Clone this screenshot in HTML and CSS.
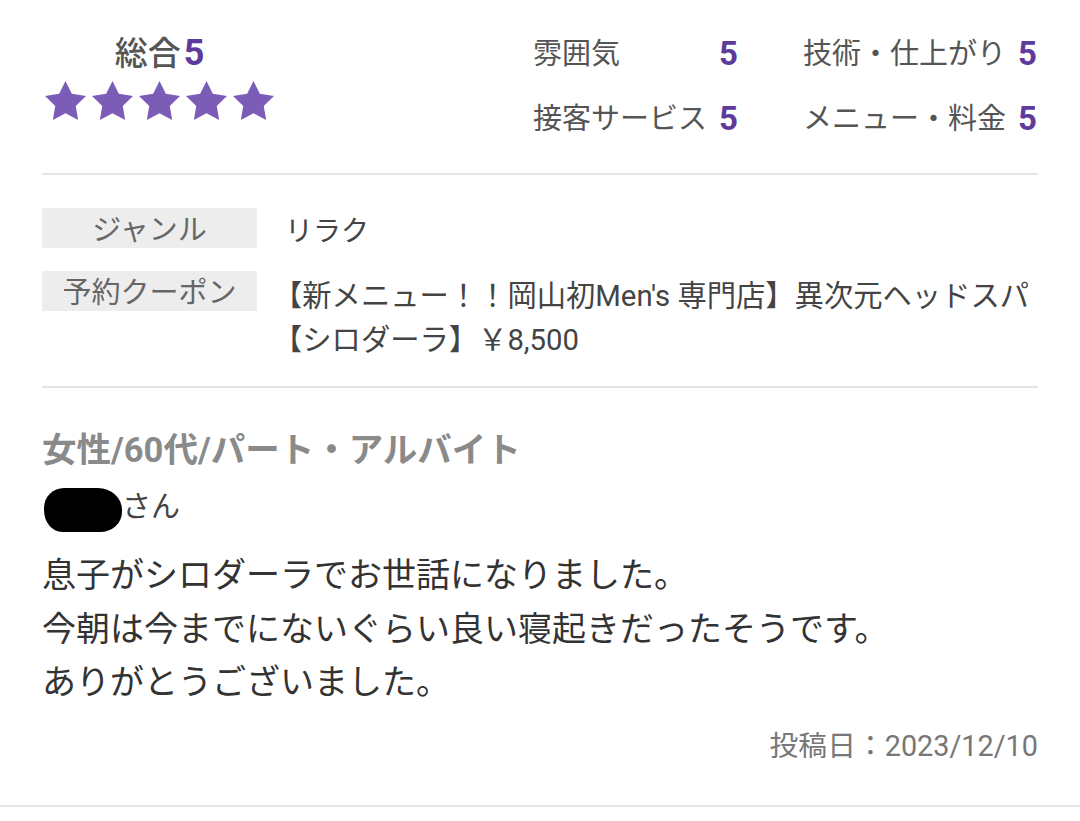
FILE: index.html
```html
<!DOCTYPE html>
<html lang="ja">
<head>
<meta charset="utf-8">
<link rel="stylesheet" href="styles.css">
</head>
<body>
<div class="review-card">
  <div class="summary">
    <div class="overall">
      <div class="overall-title">総合<span class="num">5</span></div>
      <div class="stars">
        <svg class="star" viewBox="2 2 20 19.02"><path d="M12 2l3.09 6.26L22 9.27l-5 4.870 1.18 6.88L12 17.77l-6.18 3.25L7 14.14 2 9.27l6.91-1.01L12 2z"/></svg>
        <svg class="star" viewBox="2 2 20 19.02"><path d="M12 2l3.09 6.26L22 9.27l-5 4.87 1.18 6.88L12 17.77l-6.18 3.25L7 14.14 2 9.27l6.91-1.01L12 2z"/></svg>
        <svg class="star" viewBox="2 2 20 19.02"><path d="M12 2l3.09 6.26L22 9.27l-5 4.87 1.18 6.88L12 17.77l-6.18 3.25L7 14.14 2 9.27l6.91-1.01L12 2z"/></svg>
        <svg class="star" viewBox="2 2 20 19.02"><path d="M12 2l3.09 6.26L22 9.27l-5 4.87 1.18 6.88L12 17.77l-6.18 3.25L7 14.14 2 9.27l6.91-1.01L12 2z"/></svg>
        <svg class="star" viewBox="2 2 20 19.02"><path d="M12 2l3.09 6.26L22 9.27l-5 4.87 1.18 6.88L12 17.77l-6.18 3.25L7 14.14 2 9.27l6.91-1.01L12 2z"/></svg>
      </div>
    </div>
    <div class="ratings">
      <span class="r-label">雰囲気</span><span class="num r-val">5</span>
      <span class="r-label col2">技術・仕上がり</span><span class="num r-val">5</span>
      <span class="r-label">接客サービス</span><span class="num r-val">5</span>
      <span class="r-label col2">メニュー・料金</span><span class="num r-val">5</span>
    </div>
  </div>

  <div class="details">
    <div class="d-row">
      <div class="d-label">ジャンル</div>
      <div class="d-value">リラク</div>
    </div>
    <div class="d-row">
      <div class="d-label">予約クーポン</div>
      <div class="d-value coupon">【新メニュー！！岡山初Men's 専門店】異次元ヘッドスパ<br>【シロダーラ】￥8,500</div>
    </div>
  </div>

  <div class="review">
    <div class="reviewer">女性/60代/パート・アルバイト</div>
    <div class="name"><span class="redact"></span>さん</div>
    <p class="body">息子がシロダーラでお世話になりました。<br>今朝は今までにないぐらい良い寝起きだったそうです。<br>ありがとうございました。</p>
    <div class="date">投稿日：2023/12/10</div>
  </div>
</div>
</body>
</html>
```

FILE: styles.css
```css
html, body {
  margin: 0;
  padding: 0;
  background: #fff;
}
body {
  font-family: Roboto, "Noto Sans CJK JP", sans-serif;
  color: #333;
}
.review-card {
  padding: 0 42px;
  border-bottom: 2px solid #e4e4e4;
}
.summary {
  display: flex;
  justify-content: space-between;
  align-items: flex-start;
  padding: 32px 0 34px;
  border-bottom: 2px solid #e4e4e4;
}
.overall {
  display: flex;
  flex-direction: column;
  align-items: center;
  margin-left: 3px;
}
.overall-title {
  font-size: 33px;
  line-height: 42px;
  color: #555;
  font-weight: 500;
}
.num {
  color: #5d3a9c;
  font-weight: 700;
}
.overall-title .num {
  font-size: 36px;
  margin-left: 3px;
}
.stars {
  display: flex;
  gap: 6px;
  margin-top: 6px;
}
.star {
  width: 41px;
  height: 39px;
  fill: #7b5cb7;
  display: block;
}
.ratings {
  display: grid;
  grid-template-columns: auto auto auto auto;
  column-gap: 12px;
  row-gap: 25px;
  align-items: center;
  margin-right: 1px;
  padding-top: 2px;
}
.r-label {
  font-size: 29px;
  line-height: 40px;
  color: #555;
}
.r-label.col2 {
  margin-left: 53px;
}
.r-val {
  font-size: 33px;
  line-height: 40px;
}
.details {
  padding: 31px 0 24px;
  border-bottom: 2px solid #e4e4e4;
  display: flex;
  flex-direction: column;
  gap: 15px;
}
.d-row {
  display: flex;
  align-items: flex-start;
  gap: 28px;
}
.d-label {
  flex: 0 0 215px;
  box-sizing: border-box;
  height: 40px;
  padding-top: 5px;
  margin-top: 2px;
  background: #ededed;
  color: #666;
  font-size: 29px;
  line-height: 35px;
  text-align: center;
}
.d-value {
  font-size: 28px;
  line-height: 44px;
  padding-top: 4px;
  color: #444;
}
.d-value.coupon {
  font-size: 29.3px;
  margin-left: -12px;
  padding-top: 5px;
}
.review {
  padding: 37px 0 39px;
  display: flex;
  flex-direction: column;
}
.reviewer {
  font-size: 34.5px;
  line-height: 50px;
  font-weight: 700;
  color: #8a8a8a;
}
.name {
  margin-top: 7px;
  font-size: 29px;
  line-height: 48px;
  color: #444;
  display: flex;
  align-items: center;
}
.redact {
  display: inline-block;
  width: 78px;
  height: 44px;
  background: #000;
  border-radius: 20px 24px 22px 18px / 20px 22px 20px 22px;
  margin: 6px 0 0 2px;
}
.body {
  margin: 17px 0 0;
  font-size: 34px;
  line-height: 53.5px;
  color: #333;
}
.date {
  margin-top: 16px;
  align-self: flex-end;
  font-size: 28.8px;
  line-height: 40px;
  color: #777;
}
```
